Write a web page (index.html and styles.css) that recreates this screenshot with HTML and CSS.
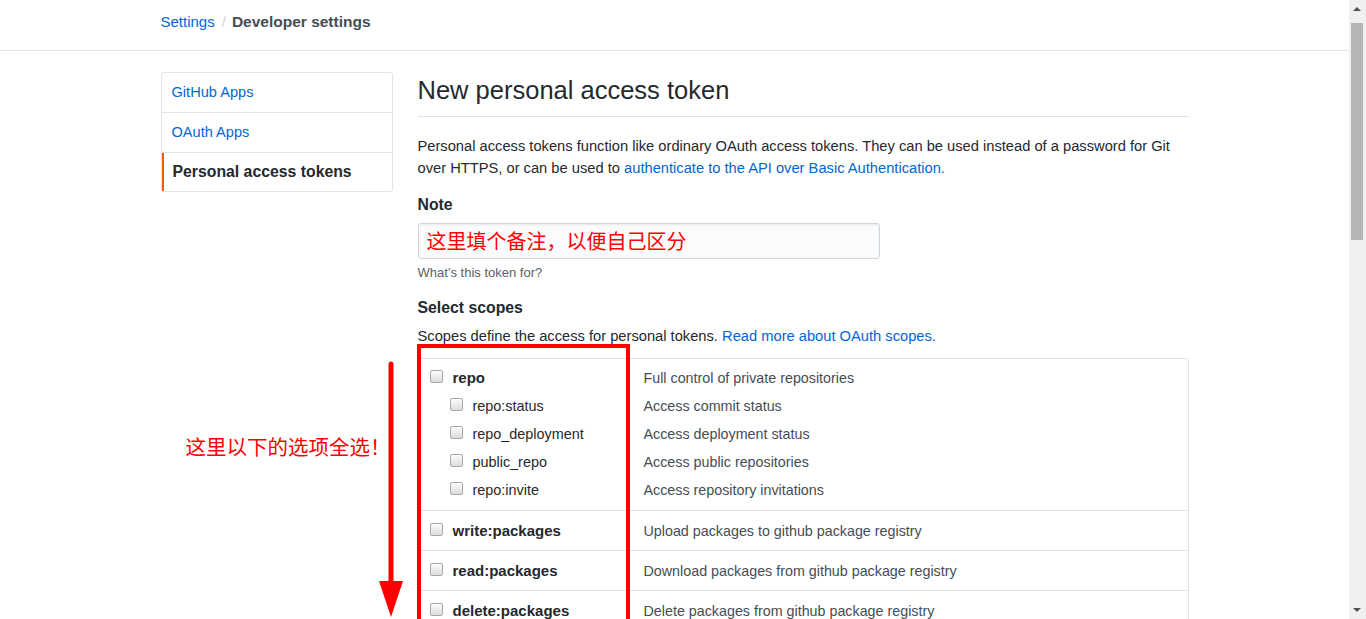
FILE: index.html
```html
<!DOCTYPE html>
<html lang="en">
<head>
<meta charset="utf-8">
<title>New personal access token</title>
<link rel="stylesheet" href="styles.css">
</head>
<body>
<header class="topbar">
  <div class="container crumbs">
    <a class="crumb-link" href="#">Settings</a>
    <span class="crumb-sep">/</span>
    <span class="crumb-current">Developer settings</span>
  </div>
</header>

<div class="container layout">
  <nav class="sidebar">
    <a class="side-item" href="#">GitHub Apps</a>
    <a class="side-item" href="#">OAuth Apps</a>
    <a class="side-item selected" href="#">Personal access tokens</a>
  </nav>

  <main class="main">
    <h1 class="title">New personal access token</h1>
    <p class="intro">Personal access tokens function like ordinary OAuth access tokens. They can be used instead of a password for Git over HTTPS, or can be used to <a href="#">authenticate to the API over Basic Authentication.</a></p>

    <div class="label">Note</div>
    <div class="input">这里填个备注，以便自己区分</div>
    <div class="hint">What’s this token for?</div>

    <div class="label scopes-label">Select scopes</div>
    <p class="scopes-desc">Scopes define the access for personal tokens. <a href="#">Read more about OAuth scopes.</a></p>

    <div class="scope-box">
      <div class="group group-big">
        <div class="row"><span class="name"><span class="cb"></span><b>repo</b></span><span class="desc">Full control of private repositories</span></div>
        <div class="row sub"><span class="name"><span class="cb"></span>repo:status</span><span class="desc">Access commit status</span></div>
        <div class="row sub"><span class="name"><span class="cb"></span>repo_deployment</span><span class="desc">Access deployment status</span></div>
        <div class="row sub"><span class="name"><span class="cb"></span>public_repo</span><span class="desc">Access public repositories</span></div>
        <div class="row sub"><span class="name"><span class="cb"></span>repo:invite</span><span class="desc">Access repository invitations</span></div>
      </div>
      <div class="group">
        <div class="row"><span class="name"><span class="cb"></span><b>write:packages</b></span><span class="desc">Upload packages to github package registry</span></div>
      </div>
      <div class="group">
        <div class="row"><span class="name"><span class="cb"></span><b>read:packages</b></span><span class="desc">Download packages from github package registry</span></div>
      </div>
      <div class="group">
        <div class="row"><span class="name"><span class="cb"></span><b>delete:packages</b></span><span class="desc">Delete packages from github package registry</span></div>
      </div>
    </div>

    <div class="anno-box"></div>
    <div class="anno-text">这里以下的选项全选！</div>
    <svg class="anno-arrow" width="30" height="260" viewBox="0 0 30 260">
      <line x1="15" y1="3" x2="15" y2="228" stroke="#ff0000" stroke-width="5" stroke-linecap="round"/>
      <polygon points="3,220 27,220 15,256" fill="#ff0000"/>
    </svg>
  </main>
</div>

<div class="scrollbar">
  <div class="sb-arrow sb-up"></div>
  <div class="sb-thumb"></div>
  <div class="sb-arrow sb-down"></div>
</div>
</body>
</html>
```

FILE: styles.css
```css
html, body {
  margin: 0;
  padding: 0;
  height: 100%;
  overflow: hidden;
  background: #fff;
}
body {
  font-family: "Liberation Sans", Arial, "Noto Sans CJK SC", sans-serif;
  font-size: 14.7px;
  line-height: 22px;
  color: #24292e;
  width: 1349px;
}
a {
  color: #0366d6;
  text-decoration: none;
}
.container {
  width: 1028px;
  margin: 0 auto;
  box-sizing: border-box;
}
.topbar {
  height: 51px;
  border-bottom: 1px solid #e1e4e8;
  box-sizing: border-box;
}
.crumbs {
  display: flex;
  align-items: center;
  height: 43px;
  font-size: 15px;
}
.crumb-link { color: #0366d6; }
.crumb-sep {
  color: #d1d5da;
  margin: 0 6px 0 7px;
}
.crumb-current {
  color: #444d56;
  font-weight: bold;
  font-size: 15.5px;
}
.layout {
  display: flex;
  gap: 25px;
  padding-top: 21px;
  position: relative;
}
.sidebar {
  width: 232px;
  flex: none;
  border: 1px solid #e1e4e8;
  border-radius: 3px;
  align-self: flex-start;
  box-sizing: border-box;
}
.side-item {
  display: block;
  height: 40px;
  line-height: 38px;
  padding-left: 10px;
  border-bottom: 1px solid #e1e4e8;
  box-sizing: border-box;
  color: #0366d6;
  font-size: 14.6px;
}
.side-item:last-child {
  border-bottom: 0;
  height: 38px;
  line-height: 37px;
}
.side-item.selected {
  color: #24292e;
  font-weight: bold;
  border-left: 2px solid #e36209;
  padding-left: 9px;
  font-size: 15.8px;
}
.main {
  flex: 1;
  position: relative;
  min-width: 0;
}
.title {
  margin: 0;
  font-size: 25.5px;
  font-weight: normal;
  line-height: 36px;
  padding-bottom: 8px;
  border-bottom: 1px solid #e1e4e8;
}
.intro {
  margin: 18px 0 0;
  padding-right: 10px;
}
.label {
  font-weight: bold;
  margin-top: 15px;
  font-size: 15.8px;
}
.input {
  margin-top: 7px;
  width: 462px;
  height: 36px;
  box-sizing: border-box;
  border: 1px solid #d1d5da;
  border-radius: 3px;
  background: #fafbfc;
  color: #ff0000;
  font-family: "Noto Sans CJK SC", sans-serif;
  font-size: 20px;
  line-height: 33px;
  padding-left: 8px;
  box-shadow: inset 0 1px 2px rgba(27,31,35,0.075);
}
.hint {
  margin-top: 5px;
  font-size: 13px;
  line-height: 18px;
  color: #586069;
}
.scopes-label { margin-top: 15px; }
.scopes-desc {
  margin: 6px 0 0;
}
.scope-box {
  margin-top: 11px;
  border: 1px solid #e1e4e8;
  border-radius: 3px;
}
.group {
  border-bottom: 1px solid #e1e4e8;
  padding: 6px 0 5px;
}
.group:last-child { border-bottom: 0; }
.group-big { padding: 5px 0 6px; }
.row {
  display: grid;
  grid-template-columns: 225px 1fr;
  height: 28px;
  line-height: 28px;
}
.name {
  display: flex;
  align-items: center;
  padding-left: 11px;
  color: #24292e;
  font-size: 14.4px;
}
.name b { font-size: 15px; }
.sub .name { padding-left: 31px; }
.cb {
  width: 11px;
  height: 11px;
  border: 1px solid #a8a8a8;
  border-radius: 2px;
  background: linear-gradient(#fcfcfc, #dcdcdc);
  margin-right: 10px;
  margin-top: -4px;
  flex: none;
}
.desc {
  color: #444d56;
  font-size: 14.3px;
}
.anno-box {
  position: absolute;
  left: -1px;
  top: 272px;
  width: 213px;
  height: 290px;
  border: 4px solid #ff0000;
  box-sizing: border-box;
}
.anno-text {
  position: absolute;
  left: -232px;
  top: 360px;
  font-family: "Noto Sans CJK SC", sans-serif;
  font-size: 20.5px;
  line-height: 28px;
  color: #ff0000;
  white-space: nowrap;
}
.anno-arrow {
  position: absolute;
  left: -42px;
  top: 289px;
}
.scrollbar {
  position: fixed;
  top: 0;
  right: 0;
  width: 17px;
  height: 100%;
  background: #f0f0f0;
}
.sb-thumb {
  position: absolute;
  left: 2px;
  top: 23px;
  width: 12px;
  height: 217px;
  background: #b5b5b5;
}
.sb-arrow {
  position: absolute;
  left: 4px;
  width: 0;
  height: 0;
  border-left: 4px solid transparent;
  border-right: 4px solid transparent;
}
.sb-up {
  top: 7px;
  border-bottom: 4px solid #505050;
}
.sb-down {
  bottom: 7px;
  border-top: 4px solid #505050;
}
```
